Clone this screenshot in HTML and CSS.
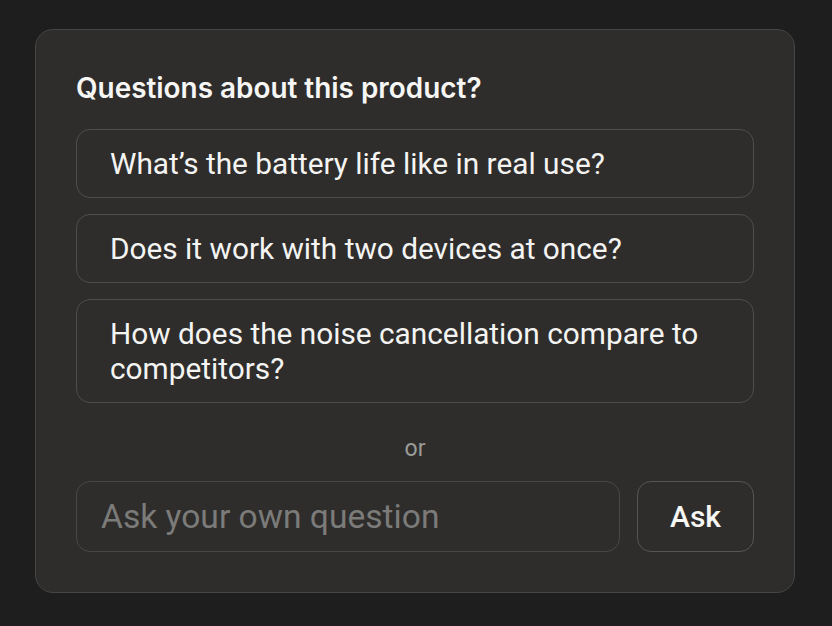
FILE: index.html
```html
<!DOCTYPE html>
<html>
<head>
<meta charset="utf-8">
<link rel="stylesheet" href="styles.css">
</head>
<body>
<div class="card">
  <h2 class="title">Questions about this product?</h2>
  <div class="questions">
    <button class="question">What’s the battery life like in real use?</button>
    <button class="question">Does it work with two devices at once?</button>
    <button class="question">How does the noise cancellation compare to competitors?</button>
  </div>
  <div class="divider">or</div>
  <div class="ask-row">
    <input class="ask-input" type="text" placeholder="Ask your own question">
    <button class="ask-btn">Ask</button>
  </div>
</div>
</body>
</html>
```
FILE: styles.css
```css
html, body {
  margin: 0;
  padding: 0;
  background: #1e1e1e;
}
body {
  padding: 29px 0 0 35px;
  font-family: Roboto, "Noto Sans", sans-serif;
  color: #f4f4f2;
}
.card {
  box-sizing: border-box;
  width: 760px;
  background: #2e2d2c;
  border: 1px solid #454545;
  border-radius: 18px;
  padding: 40px;
  display: flex;
  flex-direction: column;
}
.title {
  margin: 0 0 23px;
  font-family: Inter, Roboto, sans-serif;
  font-weight: 600;
  font-size: 27.9px;
  line-height: 36px;
  letter-spacing: 0;
  color: #f6f6f4;
}
.questions {
  display: flex;
  flex-direction: column;
  gap: 16px;
}
.question {
  display: block;
  width: 100%;
  text-align: left;
  background: transparent;
  border: 1px solid #4d4d4c;
  border-radius: 14px;
  padding: 16px 33px;
  font-family: Roboto, sans-serif;
  font-size: 29.8px;
  font-weight: 400;
  line-height: 35px;
  color: #f4f4f2;
  cursor: pointer;
}
.divider {
  margin: 31px 0 17px;
  text-align: center;
  font-size: 23px;
  line-height: 30px;
  color: #9b9b99;
}
.ask-row {
  display: flex;
  gap: 17px;
}
.ask-input {
  flex: 1;
  min-width: 0;
  box-sizing: border-box;
  height: 71px;
  background: transparent;
  border: 1px solid #474746;
  border-radius: 14px;
  padding: 0 24px;
  font-family: Roboto, sans-serif;
  font-size: 33.6px;
  color: #f4f4f2;
  outline: none;
}
.ask-input::placeholder {
  color: #7b7b79;
}
.ask-btn {
  box-sizing: border-box;
  width: 117px;
  height: 71px;
  background: transparent;
  border: 1px solid #555554;
  border-radius: 14px;
  font-family: Roboto, sans-serif;
  font-size: 30px;
  font-weight: 500;
  color: #f6f6f4;
  cursor: pointer;
}
```
